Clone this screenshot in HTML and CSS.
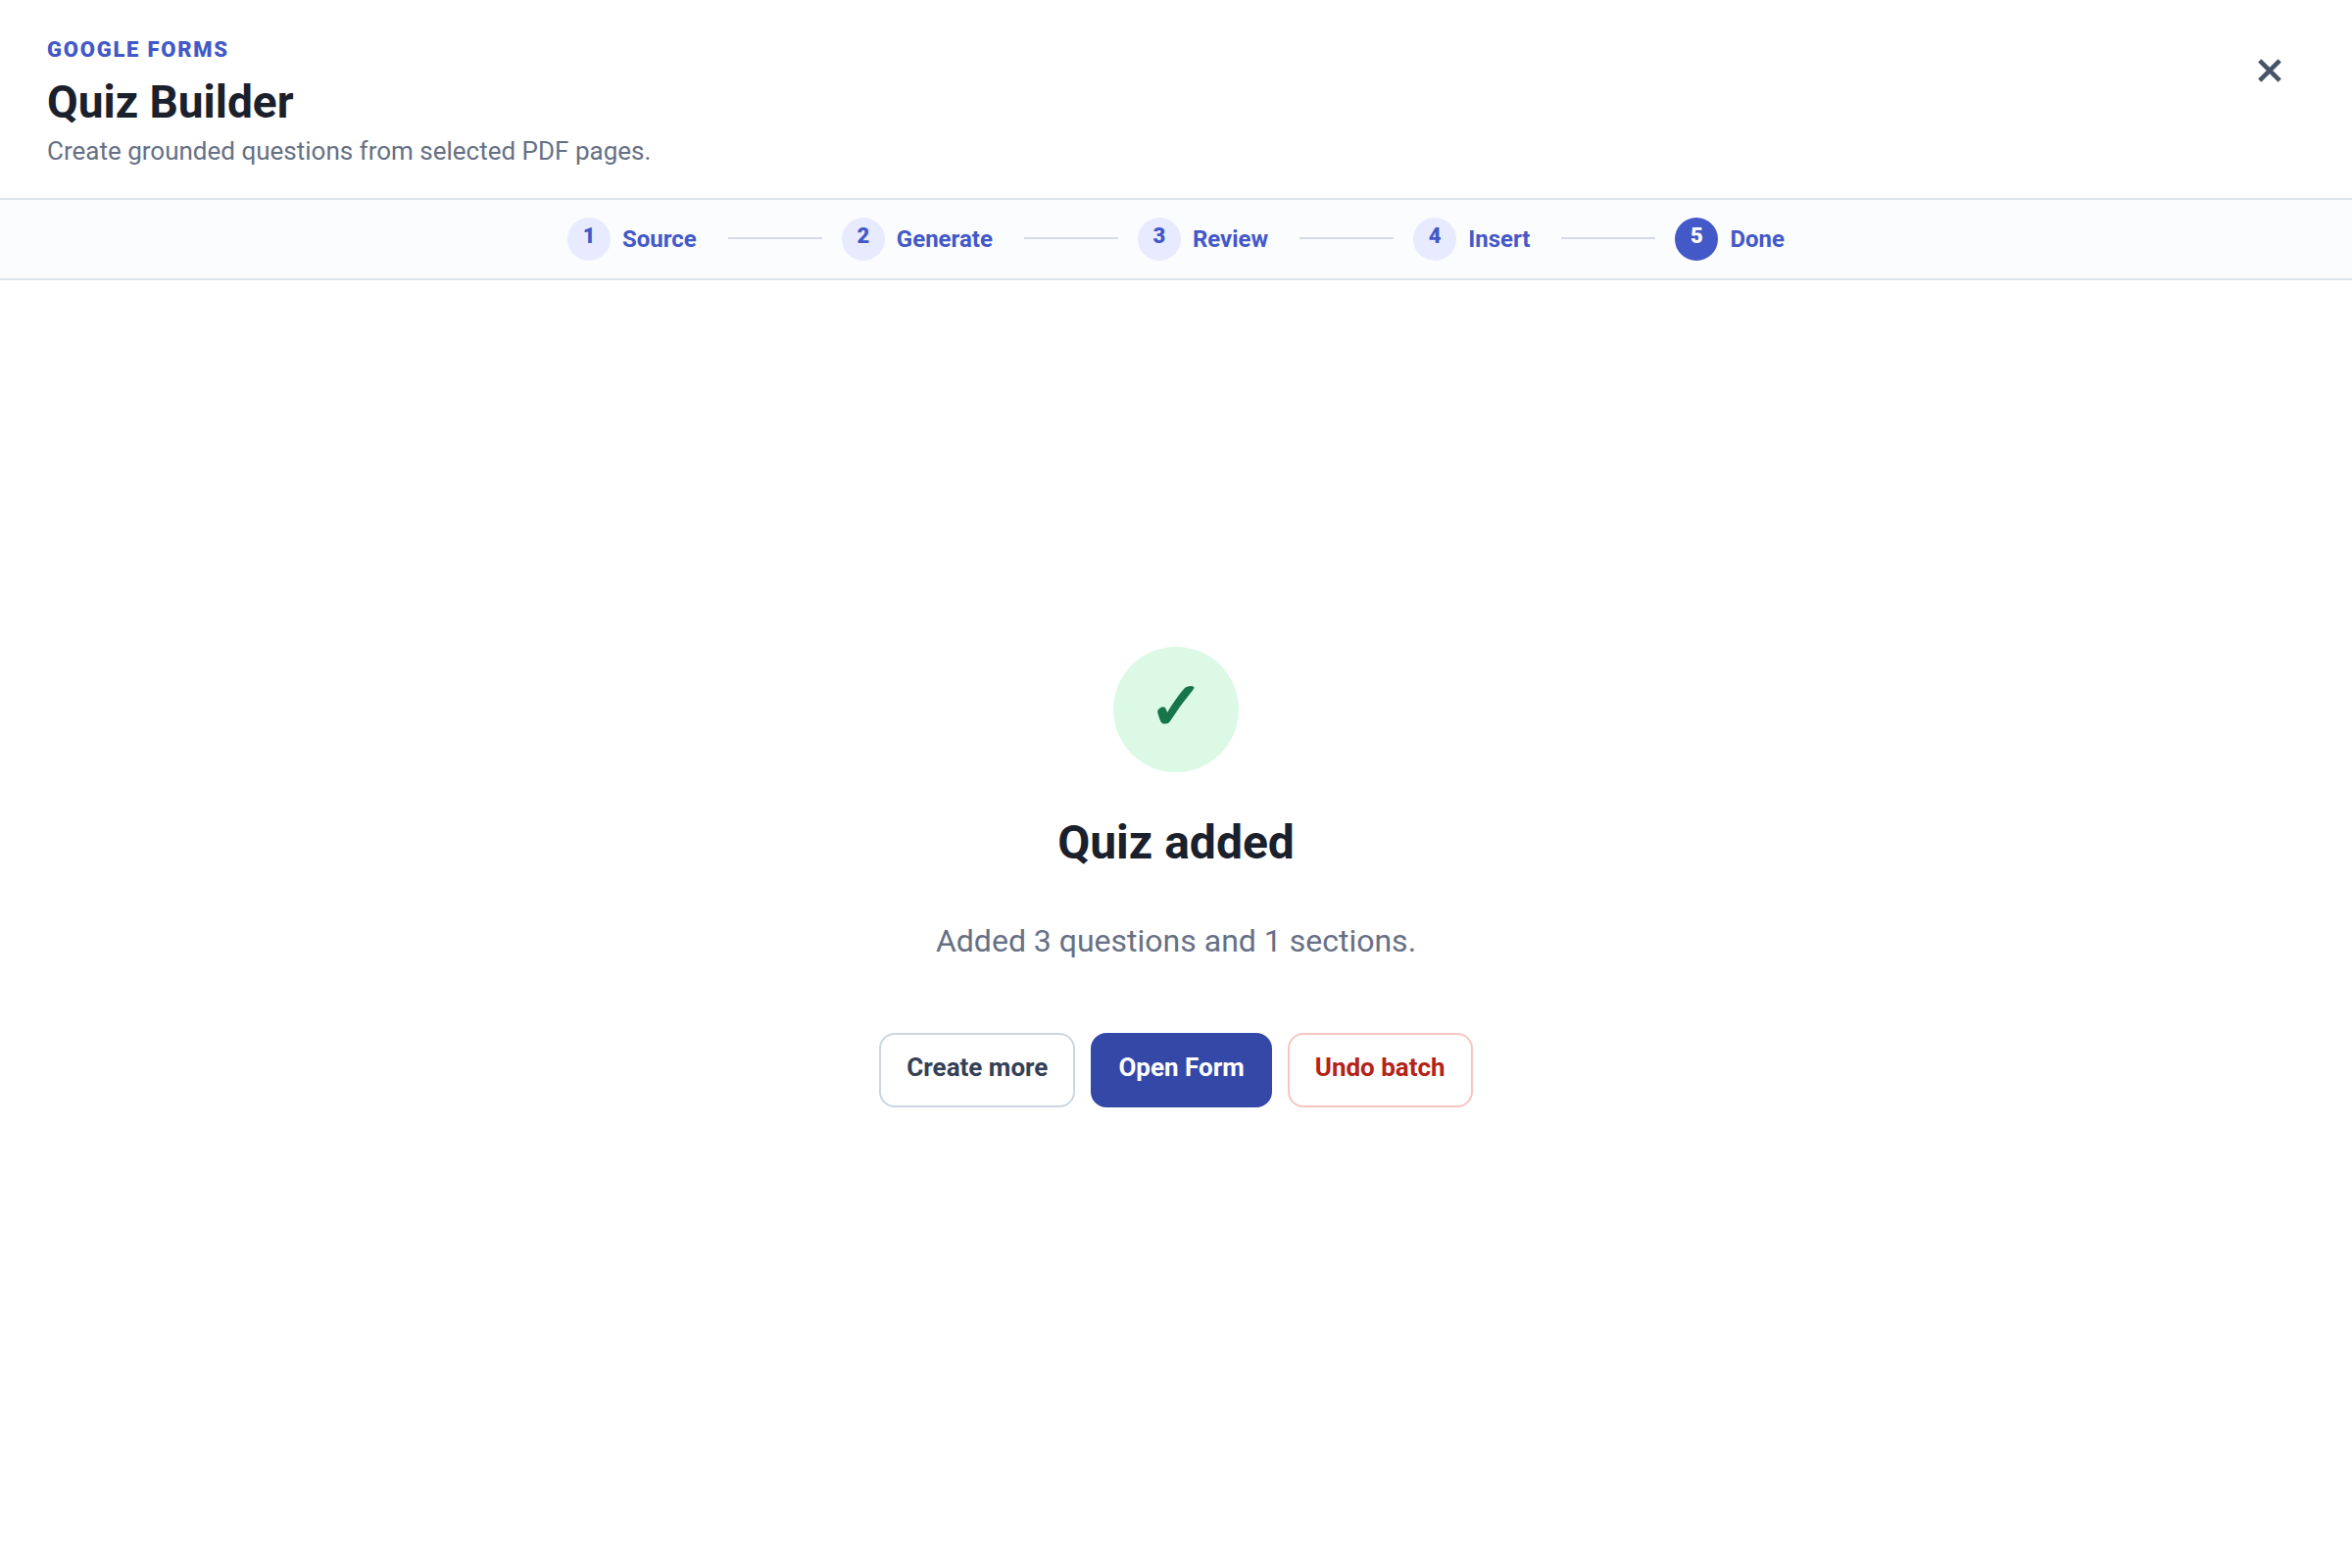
FILE: index.html
```html
<!DOCTYPE html>
<html lang="en">
<head>
<meta charset="UTF-8">
<meta name="viewport" content="width=device-width, initial-scale=1.0">
<title>Quiz Builder</title>
<link rel="stylesheet" href="styles.css">
</head>
<body>
    <header class="header">
        <div>
            <p class="eyebrow">GOOGLE FORMS</p>
            <h1 class="title">Quiz Builder</h1>
            <p class="subtitle">Create grounded questions from selected PDF pages.</p>
        </div>
        <button class="close" type="button" aria-label="Close">
            <svg width="26" height="26" viewBox="0 0 26 26" aria-hidden="true">
                <path d="M2.8 2.8 L23.2 23.2 M23.2 2.8 L2.8 23.2"/>
            </svg>
        </button>
    </header>

    <ol class="steps">
        <li class="step"><span class="step-number">1</span><span class="step-label">Source</span></li>
        <li class="step"><span class="step-number">2</span><span class="step-label">Generate</span></li>
        <li class="step"><span class="step-number">3</span><span class="step-label">Review</span></li>
        <li class="step"><span class="step-number">4</span><span class="step-label">Insert</span></li>
        <li class="step active" aria-current="step"><span class="step-number">5</span><span class="step-label">Done</span></li>
    </ol>

    <main class="done">
        <div class="check">✓</div>
        <h2 class="done-title">Quiz added</h2>
        <p class="done-text">Added 3 questions and 1 sections.</p>
        <div class="actions">
            <button class="button" type="button">Create more</button>
            <button class="button primary" type="button">Open Form</button>
            <button class="button danger" type="button">Undo batch</button>
        </div>
    </main>
</body>
</html>
```
FILE: styles.css
```css
* {
    box-sizing: border-box;
}
body {
    display: flex;
    flex-direction: column;
    min-height: 100vh;
    margin: 0;
    font-family: Roboto, Arial, sans-serif;
    color: #1a202c;
    background-color: #fff;
}
h1, h2, p {
    margin: 0;
}

/* header */
.header {
    display: flex;
    justify-content: space-between;
    align-items: flex-start;
    padding: 36px 48px 30px;
    border-bottom: 2px solid #dce3ea;
}
.eyebrow {
    font-size: 22px;
    font-weight: 900;
    line-height: 30px;
    letter-spacing: 0.08em;
    color: #4359c8;
}
.title {
    margin-top: 10px;
    font-size: 46px;
    line-height: 56px;
}
.subtitle {
    margin-top: 4px;
    font-size: 26px;
    line-height: 36px;
    color: #667085;
}
.close {
    display: flex;
    align-items: center;
    justify-content: center;
    width: 72px;
    height: 72px;
    padding: 0;
    border: none;
    border-radius: 16px;
    background: none;
    cursor: pointer;
}
.close path {
    fill: none;
    stroke: #475467;
    stroke-width: 4.6;
}

/* progress */
.steps {
    display: flex;
    justify-content: center;
    gap: 20px;
    margin: 0;
    padding: 18px 48px;
    border-bottom: 2px solid #dce3ea;
    background-color: #fbfcfe;
    list-style: none;
}
.step {
    display: flex;
    align-items: center;
    font-weight: 700;
    color: #4359c8;
}
.step-number {
    display: flex;
    align-items: center;
    justify-content: center;
    width: 44px;
    height: 44px;
    padding-bottom: 8px;
    border-radius: 50%;
    background-color: #e8ebff;
    font-size: 22px;
    font-weight: 900;
}
.step-label {
    margin-left: 12px;
    font-size: 24px;
    line-height: 32px;
}
.step:not(:last-child)::after {
    content: "";
    width: 96px;
    height: 2px;
    margin: 0 0 2px 32px;
    background-color: #d5dbe6;
}
.step.active .step-number {
    background-color: #4359c8;
    color: #fff;
}

/* result */
.done {
    flex: 1;
    display: flex;
    flex-direction: column;
    align-items: center;
    justify-content: center;
    padding: 48px 48px 144px;
    text-align: center;
}
.check {
    display: flex;
    align-items: center;
    justify-content: center;
    width: 128px;
    height: 128px;
    padding-bottom: 6px;
    border-radius: 50%;
    background-color: #dcf9e6;
    font-size: 68px;
    font-weight: 900;
    color: #17754a;
}
.done-title {
    margin-top: 40px;
    font-size: 48px;
    line-height: 64px;
}
.done-text {
    margin-top: 48px;
    font-size: 32px;
    line-height: 40px;
    color: #667085;
}
.actions {
    display: flex;
    gap: 16px;
    margin-top: 74px;
}
.button {
    height: 76px;
    padding: 0 26px 6px;
    border: 2px solid #ccd5e0;
    border-radius: 16px;
    background-color: #fff;
    font-family: inherit;
    font-size: 26px;
    font-weight: 700;
    color: #344054;
    cursor: pointer;
}
.primary {
    border-color: #3448a8;
    background-color: #3448a8;
    color: #fff;
}
.danger {
    border-color: #f7c5c1;
    color: #b42318;
}
```
